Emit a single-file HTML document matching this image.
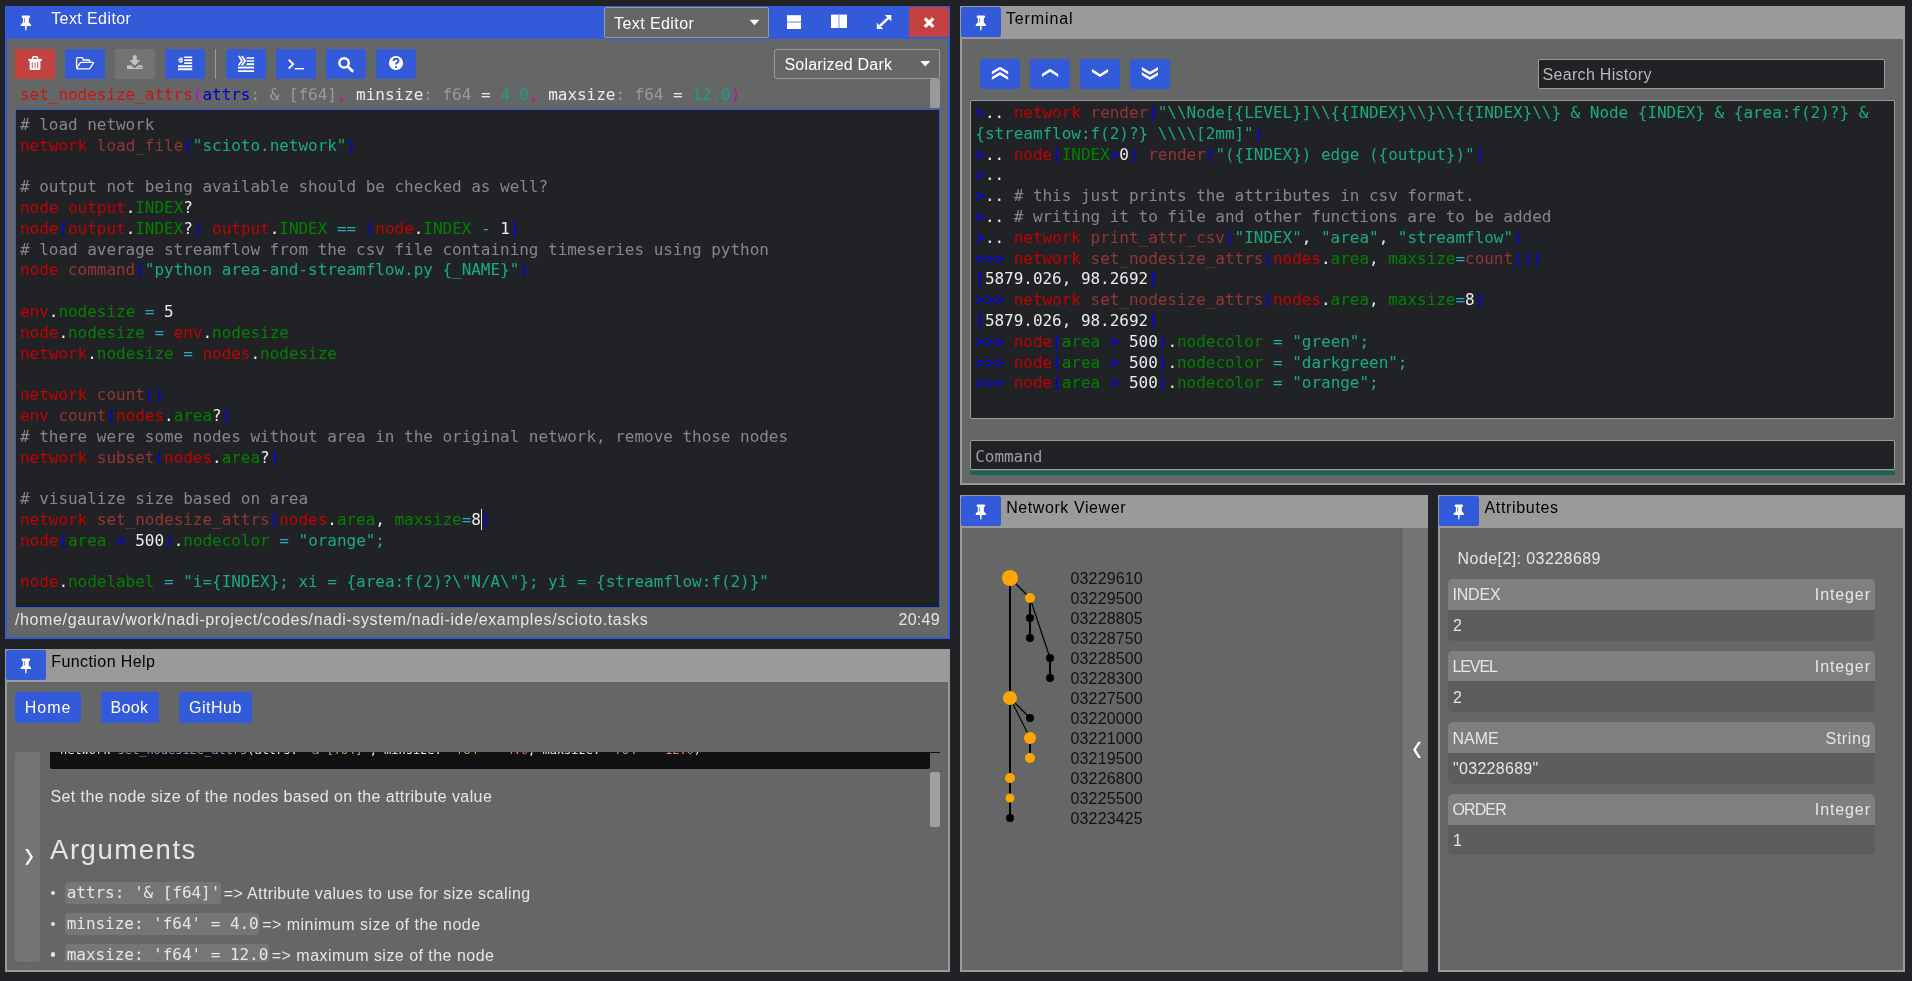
<!DOCTYPE html>
<html lang="en"><head><meta charset="utf-8"><title>NADI IDE</title>
<style>
*{box-sizing:border-box;margin:0;padding:0}
html,body{width:1912px;height:981px;overflow:hidden;background:#202225}
body{position:relative;font-family:"Liberation Sans","DejaVu Sans",sans-serif;font-size:16px;color:#e6e6e6}
.P{position:absolute}
.mono{font-family:"DejaVu Sans Mono","Liberation Mono",monospace;letter-spacing:-.002em;white-space:pre;font-size:16px;line-height:20.8px}
.ln{height:20.8px;white-space:pre}
.tx{position:absolute;white-space:pre}
.dk{color:#000}
.panel{position:absolute;background:#9a9a9b}
.panel.focus{background:#335ad9}
.pbody{position:absolute;background:#656666}
.btn{position:absolute;background:#335ad9;border-radius:2px;width:40px;height:30px}
.btn.red{background:#c3423f}
.btn.dis{background:#727473}
.btn svg{position:absolute;left:0;top:0;width:40px;height:30px}
.tbtn{position:absolute;background:#335ad9;border-radius:2px;height:30.8px;top:692px}
.pick{position:absolute;background:#656666;border:1px solid #9a9a9b;border-radius:2px}
.inp{position:absolute;background:#202225;border:1px solid #9a9a9b;border-radius:2px}
.k{color:#c40000}.f{color:#953535}.p{color:#0000ff}.a{color:#008200}.s{color:#19ad7b}.o{color:#2aa9b8}.w{color:#ececec}.c{color:#878787}
.g{color:#cc1414}.m{color:#c408c4}.b{color:#0000c8}.y{color:#9a9a9b}.t{color:#1f9c8b}
.h{color:#7f9fc4}.j{color:#9db86c}.n{color:#e0876a}
.card{position:absolute;left:1448px;width:427px;height:61.6px;border-radius:5px;overflow:hidden;background:#5d5d5d}
.card .hd{position:absolute;left:0;top:0;width:427px;height:30.8px;background:#7f7f7f}
.ic{position:absolute;background:#757776;border-radius:3px}
</style></head>
<body>
<svg width="0" height="0" style="position:absolute">
<defs>
<symbol id="i-pin" viewBox="0 0 40 30"><path fill="#fff" d="M16.600 8.500h6.500q.900 0 .900 .900v.700q0 .900-.900 .900h-.300v4.600q2.300 1.200 2.400 3.400h-4.450l-.350 4.300q-.550 .600-1.100 0l-.350-4.300h-4.450q.100-2.200 2.400-3.400v-4.600h-.300q-.900 0-.900-.900v-.700q0-.900 .900-.900z"/><path stroke="#335ad9" stroke-width=".700" d="M18.600 11.200v4.300"/></symbol>
<symbol id="i-trash" viewBox="0 0 40 30"><path fill="none" stroke="#fff" stroke-width="1.400" d="M17.600 10.200v-1.300q0-1.200 1.200-1.200h2.600q1.200 0 1.200 1.200v1.300"/><path fill="#fff" d="M13.400 9.900h13.400v2h-13.400z"/><path fill="#fff" d="M14.600 11.500h10.800v8.100q0 1.300-1.300 1.300h-8.200q-1.300 0-1.300-1.300z"/><path stroke="#c3423f" stroke-width=".9" d="M17.300 13.200v6M20 13.200v6M22.700 13.200v6"/></symbol>
<symbol id="i-folder" viewBox="0 0 40 30"><path fill="none" stroke="#fff" stroke-width="1.300" stroke-linejoin="round" d="M11.600 18.400v-8.200q0-1.500 1.500-1.500h3.400q1.500 0 1.500 1.500v.8h5.500q1.500 0 1.500 1.500v1"/><path fill="none" stroke="#fff" stroke-width="1.300" stroke-linejoin="round" d="M12.200 19.800q-.9 0-.3-1l2.900-4.500q.6-.9 1.700-.9h11.200q1.200 0 .5 1l-3 4.500q-.6.900-1.800.9z"/></symbol>
<symbol id="i-dl" viewBox="0 0 40 30"><path fill="#c2c2c2" d="M17.800 7.100q0-.8 .8-.8h2.300q.8 0 .8 .8v4h2.600q.9 0 .3 .7l-4.300 4.500q-.5.500-1 0l-4.300-4.500q-.6-.7 .3-.7h2.500z"/><path fill="#c2c2c2" d="M12.800 16.200h3.400l2.300 2.300q1.300 1.100 2.600 0l2.300-2.300h3.400q.8 0 .8 .8v2.300q0 .8-.8 .8h-14q-.8 0-.8-.8v-2.300q0-.8 .8-.8z"/><circle cx="23.700" cy="18.600" r=".65" fill="#727473"/><circle cx="25.700" cy="18.600" r=".65" fill="#727473"/></symbol>
<symbol id="i-ind1" viewBox="0 0 40 30"><path fill="#fff" d="M19.200 7.400h8v1.700h-8zM19.200 10.350h8v1.750h-8zM19.200 13.300h8v1.700h-8zM13 16.300h14.200v1.900h-14.200zM13 19.200h14.200v2h-14.200z"/><path fill="none" stroke="#fff" stroke-width="1" d="M18 10.300h-4.200M18 12.200h-4.200M15.800 8.400l-2.300 2.900l2.300 2.700M17.200 8.300l-1.200 5.800"/></symbol>
<symbol id="i-ind2" viewBox="0 0 40 30"><path fill="#fff" d="M20.600 8.200h7.500v1.600h-7.500zM20.600 11.300h7.500v1.500h-7.500zM20.600 14.300h7.500v1.600h-7.500zM12 18h16.100v1.600h-16.100zM12 21.200h16.100v1.700h-16.100z"/><path fill="#fff" fill-opacity=".45" d="M12 16.600h16.100v1.100h-16.100z"/><path fill="none" stroke="#fff" stroke-width="1.700" d="M12.700 7l3.300 4.700l-3.300 4.600M15.900 7l3.300 4.700l-3.300 4.600"/></symbol>
<symbol id="i-term" viewBox="0 0 40 30"><path fill="none" stroke="#fff" stroke-width="1.900" d="M12.700 10.700l4.500 4.400l-4.500 4.400"/><path fill="#fff" d="M18.800 19h9.100v1.400h-9.100z"/></symbol>
<symbol id="i-search" viewBox="0 0 40 30"><circle cx="18.100" cy="13.900" r="4.700" fill="none" stroke="#fff" stroke-width="2.500"/><path stroke="#fff" stroke-width="2.700" stroke-linecap="round" d="M21.900 17.700l4.500 4.300"/></symbol>
<symbol id="i-help" viewBox="0 0 40 30"><circle cx="20" cy="14" r="7.100" fill="#fff"/><path fill="none" stroke="#335ad9" stroke-width="1.900" d="M17.500 12q.1-2.300 2.600-2.300q2.400 0 2.400 2q0 1.300-1.300 1.900q-1.100.5-1.100 1.900"/><circle cx="20.100" cy="18.100" r="1.100" fill="#335ad9"/></symbol>
<symbol id="i-hsplit" viewBox="0 0 40 30"><path fill="#fff" d="M13 8.200h14v13.800h-14z"/><path fill="#8196e8" d="M13 14.500h14v1.200h-14z"/></symbol>
<symbol id="i-vsplit" viewBox="0 0 40 30"><path fill="#fff" d="M12 7.600h16v13.400h-16z"/><path fill="#8196e8" d="M19.500 7.600h1v13.400h-1z"/></symbol>
<symbol id="i-max" viewBox="0 0 40 30"><path stroke="#fff" stroke-width="2.600" d="M16 18.900l8.200-7.800"/><path fill="#fff" d="M27.300 8v6.200l-6.500-6.200zM12.800 22v-6.200l6.500 6.200z"/></symbol>
<symbol id="i-x" viewBox="0 0 40 30"><path stroke="#fff" stroke-width="3.400" d="M15.800 11.400l8.500 8.500M24.300 11.400l-8.500 8.500"/></symbol>
<symbol id="i-up2" viewBox="0 0 40 30"><path fill="#fff" d="M11.8 12.5L20 7.7L28.2 12.5V15.4L20 10.6L11.8 15.4zM11.8 17.9L20 13.1L28.2 17.9V20.8L20 16L11.8 20.8z"/></symbol>
<symbol id="i-up1" viewBox="0 0 40 30"><path fill="#fff" d="M11.9 15L20.05 9.8L28.2 15V18L20.05 12.8L11.9 18z"/></symbol>
<symbol id="i-dn1" viewBox="0 0 40 30"><path fill="#fff" d="M11.9 10.1L20 14.9L28.1 10.1V13.1L20 17.9L11.9 13.1z"/></symbol>
<symbol id="i-dn2" viewBox="0 0 40 30"><path fill="#fff" d="M11.8 8L19.9 12.8L28 8V10.9L19.9 15.7L11.8 10.9zM11.8 13.3L19.9 18.1L28 13.3V16.2L19.9 21L11.8 16.2z"/></symbol>
</defs>
</svg>
<div class="P" style="left:0;top:0;width:1912px;height:981px;will-change:transform">
<div class="P panel focus" style="left:5px;top:6px;width:945px;height:633px;"></div>
<div class="P pbody" style="left:7px;top:39px;width:941px;height:598px;"></div>
<div class="btn " style="left:6px;top:7px"><svg viewBox="0 0 40 30"><use href="#i-pin"/></svg></div>
<div class="tx " style="top:9.36px;font-size:16px;line-height:20px;height:20px;left:51.2px;color:#fff;letter-spacing:0.41px;">Text Editor</div>
<div class="P pick" style="left:604px;top:7px;width:165px;height:31px;"></div>
<div class="tx " style="top:13.86px;font-size:16px;line-height:20px;height:20px;left:614px;color:#fff;letter-spacing:0.43px;">Text Editor</div>
<svg class="P" style="left:749px;top:19px" width="12" height="8" viewBox="0 0 12 8"><path fill="#fff" d="M.6 .7h9.800l-4.900 5.600z"/></svg>
<div class="btn " style="left:774px;top:7px"><svg viewBox="0 0 40 30"><use href="#i-hsplit"/></svg></div>
<div class="btn " style="left:819px;top:7px"><svg viewBox="0 0 40 30"><use href="#i-vsplit"/></svg></div>
<div class="btn " style="left:864px;top:7px"><svg viewBox="0 0 40 30"><use href="#i-max"/></svg></div>
<div class="btn red" style="left:909px;top:7px"><svg viewBox="0 0 40 30"><use href="#i-x"/></svg></div>
<div class="btn red" style="left:15px;top:49px"><svg viewBox="0 0 40 30"><use href="#i-trash"/></svg></div>
<div class="btn " style="left:65px;top:49px"><svg viewBox="0 0 40 30"><use href="#i-folder"/></svg></div>
<div class="btn dis" style="left:115px;top:49px"><svg viewBox="0 0 40 30"><use href="#i-dl"/></svg></div>
<div class="btn " style="left:165px;top:49px"><svg viewBox="0 0 40 30"><use href="#i-ind1"/></svg></div>
<div class="btn " style="left:226px;top:49px"><svg viewBox="0 0 40 30"><use href="#i-ind2"/></svg></div>
<div class="btn " style="left:276px;top:49px"><svg viewBox="0 0 40 30"><use href="#i-term"/></svg></div>
<div class="btn " style="left:326px;top:49px"><svg viewBox="0 0 40 30"><use href="#i-search"/></svg></div>
<div class="btn " style="left:376px;top:49px"><svg viewBox="0 0 40 30"><use href="#i-help"/></svg></div>
<div class="P " style="left:215px;top:49px;width:1px;height:30px;background:#9a9a9b"></div>
<div class="P pick" style="left:774px;top:49px;width:166px;height:30px;"></div>
<div class="tx " style="top:55.36px;font-size:16px;line-height:20px;height:20px;left:784.5px;color:#fff;letter-spacing:0.19px;">Solarized Dark</div>
<svg class="P" style="left:920px;top:60px" width="12" height="8" viewBox="0 0 12 8"><path fill="#fff" d="M.3 .9h10l-5 5.600z"/></svg>
<div class="P mono" style="left:20px;top:84.8px;width:900px;height:20.8px;"><span class="g">set_nodesize_attrs</span><span class="m">(</span><span class="b">attrs</span><span class="y">: &amp; [f64]</span><span class="m">,</span> <span class="w">minsize</span><span class="y">: f64</span> <span class="w">=</span> <span class="t">4.0</span><span class="m">,</span> <span class="w">maxsize</span><span class="y">: f64</span> <span class="w">=</span> <span class="t">12.0</span><span class="m">)</span></div>
<div class="P " style="left:930px;top:79px;width:10px;height:29px;background:#9a9a9b;border-radius:2px"></div>
<div class="P " style="left:15px;top:109px;width:925px;height:499px;background:#202225;border:1px solid #335ad9"></div>
<div class="P mono" style="left:20px;top:114.8px;width:915px;height:490px;"><div class="ln"><span class="c"># load network</span></div><div class="ln"><span class="k">network</span> <span class="f">load_file</span><span class="p">(</span><span class="s">"scioto.network"</span><span class="p">)</span></div><div class="ln"> </div><div class="ln"><span class="c"># output not being available should be checked as well?</span></div><div class="ln"><span class="k">node</span> <span class="k">output</span><span class="w">.</span><span class="a">INDEX</span><span class="w">?</span></div><div class="ln"><span class="k">node</span><span class="p">(</span><span class="k">output</span><span class="w">.</span><span class="a">INDEX</span><span class="w">?</span><span class="p">)</span> <span class="k">output</span><span class="w">.</span><span class="a">INDEX</span> <span class="o">==</span> <span class="p">(</span><span class="k">node</span><span class="w">.</span><span class="a">INDEX</span> <span class="o">-</span> <span class="w">1</span><span class="p">)</span></div><div class="ln"><span class="c"># load average streamflow from the csv file containing timeseries using python</span></div><div class="ln"><span class="k">node</span> <span class="f">command</span><span class="p">(</span><span class="s">"python area-and-streamflow.py {_NAME}"</span><span class="p">)</span></div><div class="ln"> </div><div class="ln"><span class="k">env</span><span class="w">.</span><span class="a">nodesize</span> <span class="o">=</span> <span class="w">5</span></div><div class="ln"><span class="k">node</span><span class="w">.</span><span class="a">nodesize</span> <span class="o">=</span> <span class="k">env</span><span class="w">.</span><span class="a">nodesize</span></div><div class="ln"><span class="k">network</span><span class="w">.</span><span class="a">nodesize</span> <span class="o">=</span> <span class="k">nodes</span><span class="w">.</span><span class="a">nodesize</span></div><div class="ln"> </div><div class="ln"><span class="k">network</span> <span class="f">count</span><span class="p">()</span></div><div class="ln"><span class="k">env</span> <span class="f">count</span><span class="p">(</span><span class="k">nodes</span><span class="w">.</span><span class="a">area</span><span class="w">?</span><span class="p">)</span></div><div class="ln"><span class="c"># there were some nodes without area in the original network, remove those nodes</span></div><div class="ln"><span class="k">network</span> <span class="f">subset</span><span class="p">(</span><span class="k">nodes</span><span class="w">.</span><span class="a">area</span><span class="w">?</span><span class="p">)</span></div><div class="ln"> </div><div class="ln"><span class="c"># visualize size based on area</span></div><div class="ln"><span class="k">network</span> <span class="f">set_nodesize_attrs</span><span class="p">(</span><span class="k">nodes</span><span class="w">.</span><span class="a">area</span><span class="w">,</span> <span class="a">maxsize</span><span class="o">=</span><span class="w">8</span><span class="p">)</span></div><div class="ln"><span class="k">node</span><span class="p">(</span><span class="a">area</span> <span class="p">&gt;</span> <span class="w">500</span><span class="p">)</span><span class="w">.</span><span class="a">nodecolor</span> <span class="o">=</span> <span class="s">"orange"</span><span class="o">;</span></div><div class="ln"> </div><div class="ln"><span class="k">node</span><span class="w">.</span><span class="a">nodelabel</span> <span class="o">=</span> <span class="s">"i={INDEX}; xi = {area:f(2)?\"N/A\"}; yi = {streamflow:f(2)}"</span></div></div>
<div class="P " style="left:481.2px;top:509px;width:1px;height:21px;background:#e6e6e6"></div>
<div class="tx " style="top:610.36px;font-size:16px;line-height:20px;height:20px;left:15px;letter-spacing:0.62px;">/home/gaurav/work/nadi-project/codes/nadi-system/nadi-ide/examples/scioto.tasks</div>
<div class="tx " style="top:610.36px;font-size:16px;line-height:20px;height:20px;right:972px;letter-spacing:0.3px;">20:49</div>
<div class="P panel" style="left:5px;top:649px;width:945px;height:323px;"></div>
<div class="P pbody" style="left:7px;top:682px;width:941px;height:288px;"></div>
<div class="btn " style="left:6px;top:650px"><svg viewBox="0 0 40 30"><use href="#i-pin"/></svg></div>
<div class="tx dk" style="top:652.36px;font-size:16px;line-height:20px;height:20px;left:51.3px;letter-spacing:0.41px;">Function Help</div>
<div class="tbtn" style="left:15px;width:65.5px"></div>
<div class="tx " style="top:698.36px;font-size:16px;line-height:20px;height:20px;left:24.7px;color:#fff;letter-spacing:1px;">Home</div>
<div class="tbtn" style="left:100.5px;width:58.5px"></div>
<div class="tx " style="top:698.36px;font-size:16px;line-height:20px;height:20px;left:110.6px;color:#fff;letter-spacing:0.3px;">Book</div>
<div class="tbtn" style="left:179px;width:73px"></div>
<div class="tx " style="top:698.36px;font-size:16px;line-height:20px;height:20px;left:189.1px;color:#fff;letter-spacing:0.5px;">GitHub</div>
<div class="P " style="left:15px;top:752px;width:25px;height:210px;background:#737574;border-radius:2px"></div>
<svg class="P" style="left:24px;top:848px" width="11" height="18" viewBox="24 848 11 18"><path fill="#fff" d="M25.300 849h2.600l5.100 7.900l-5.100 7.800h-2.600l5-7.800z"/></svg>
<div class="P" style="left:50px;top:752px;width:890px;height:210px;overflow:hidden">
<div class="P" style="left:0;top:-14px;width:880px;height:31px;background:#111;border-radius:2px"></div>
<div class="P mono" style="left:10px;top:-9.000px;font-size:12px;line-height:15.600px;height:15.600px"><span class="w">network </span><span class="h">set_nodesize_attrs</span><span class="w">(attrs: </span><span class="j">'&amp; [f64]'</span><span class="w">, minsize: </span><span class="j">'f64'</span><span class="w"> = </span><span class="n">4.0</span><span class="w">, maxsize: </span><span class="j">'f64'</span><span class="w"> = </span><span class="n">12.0</span><span class="w">)</span></div>
<div class="P" style="left:880px;top:0;width:10px;height:1px;background:#111"></div>
<div class="P" style="left:880px;top:20px;width:10px;height:55px;background:#a0a0a0;border-radius:2px"></div>
</div>
<div class="tx " style="top:787.36px;font-size:16px;line-height:20px;height:20px;left:50.5px;letter-spacing:0.4px;">Set the node size of the nodes based on the attribute value</div>
<div class="tx " style="top:832.78px;font-size:27.5px;line-height:34.38px;height:34.38px;left:50px;letter-spacing:1.55px;">Arguments</div>
<div class="P" style="left:50px;top:752px;width:880px;height:210px;overflow:hidden">
<div class="P" style="left:.5px;top:138.80px;width:4.4px;height:4.4px;border-radius:50%;background:#e6e6e6"></div>
<div class="ic" style="left:15px;top:130.10px;width:155.5px;height:22px"></div>
<div class="P mono" style="left:16.700px;top:131.06px;height:20.800px">attrs: '&amp; [f64]'</div>
<div class="P" style="left:.5px;top:169.60px;width:4.4px;height:4.4px;border-radius:50%;background:#e6e6e6"></div>
<div class="ic" style="left:15px;top:160.90px;width:194px;height:22px"></div>
<div class="P mono" style="left:16.700px;top:161.86px;height:20.800px">minsize: 'f64' = 4.0</div>
<div class="P" style="left:.5px;top:200.40px;width:4.4px;height:4.4px;border-radius:50%;background:#e6e6e6"></div>
<div class="ic" style="left:15px;top:191.70px;width:203.6px;height:22px"></div>
<div class="P mono" style="left:16.700px;top:192.66px;height:20.800px">maxsize: 'f64' = 12.0</div>
</div>
<div class="P" style="left:50px;top:752px;width:880px;height:210px;overflow:hidden">
<div class="tx" style="left:173.7px;top:132.36px;line-height:20px;letter-spacing:0.37px">=&gt; Attribute values to use for size scaling</div>
<div class="tx" style="left:212.2px;top:163.16px;line-height:20px;letter-spacing:0.48px">=&gt; minimum size of the node</div>
<div class="tx" style="left:221.8px;top:193.96px;line-height:20px;letter-spacing:0.47px">=&gt; maximum size of the node</div>
</div>
<div class="P panel" style="left:960px;top:6px;width:945px;height:479px;"></div>
<div class="P pbody" style="left:962px;top:39px;width:941px;height:444px;"></div>
<div class="btn " style="left:961px;top:7px"><svg viewBox="0 0 40 30"><use href="#i-pin"/></svg></div>
<div class="tx dk" style="top:9.36px;font-size:16px;line-height:20px;height:20px;left:1005.9px;letter-spacing:0.88px;">Terminal</div>
<div class="btn " style="left:980px;top:59px"><svg viewBox="0 0 40 30"><use href="#i-up2"/></svg></div>
<div class="btn " style="left:1030px;top:59px"><svg viewBox="0 0 40 30"><use href="#i-up1"/></svg></div>
<div class="btn " style="left:1080px;top:59px"><svg viewBox="0 0 40 30"><use href="#i-dn1"/></svg></div>
<div class="btn " style="left:1130px;top:59px"><svg viewBox="0 0 40 30"><use href="#i-dn2"/></svg></div>
<div class="P inp" style="left:1538px;top:59px;width:347px;height:30px;"></div>
<div class="tx " style="top:65.36px;font-size:16px;line-height:20px;height:20px;left:1542.6px;color:#b9b9b9;letter-spacing:0.3px;">Search History</div>
<div class="P " style="left:970px;top:100px;width:925px;height:319px;background:#202225;border:1px solid #9a9a9b;border-radius:2px"></div>
<div class="P mono" style="left:975.3px;top:103px;width:915px;height:300px;"><div class="ln"><span class="p">&gt;</span><span class="w">..</span> <span class="k">network</span> <span class="f">render</span><span class="p">(</span><span class="s">"\\Node[{LEVEL}]\\{{INDEX}\\}\\{{INDEX}\\} &amp; Node {INDEX} &amp; {area:f(2)?} &amp;</span></div><div class="ln"><span class="s">{streamflow:f(2)?} \\\\[2mm]"</span><span class="p">)</span></div><div class="ln"><span class="p">&gt;</span><span class="w">..</span> <span class="k">node</span><span class="p">(</span><span class="a">INDEX</span><span class="p">&gt;</span><span class="w">0</span><span class="p">)</span> <span class="f">render</span><span class="p">(</span><span class="s">"({INDEX}) edge ({output})"</span><span class="p">)</span></div><div class="ln"><span class="p">&gt;</span><span class="w">..</span></div><div class="ln"><span class="p">&gt;</span><span class="w">..</span> <span class="c"># this just prints the attributes in csv format.</span></div><div class="ln"><span class="p">&gt;</span><span class="w">..</span> <span class="c"># writing it to file and other functions are to be added</span></div><div class="ln"><span class="p">&gt;</span><span class="w">..</span> <span class="k">network</span> <span class="f">print_attr_csv</span><span class="p">(</span><span class="s">"INDEX"</span><span class="w">,</span> <span class="s">"area"</span><span class="w">,</span> <span class="s">"streamflow"</span><span class="p">)</span></div><div class="ln"><span class="p">&gt;&gt;&gt;</span> <span class="k">network</span> <span class="f">set_nodesize_attrs</span><span class="p">(</span><span class="k">nodes</span><span class="w">.</span><span class="a">area</span><span class="w">,</span> <span class="a">maxsize</span><span class="o">=</span><span class="f">count</span><span class="p">())</span></div><div class="ln"><span class="p">[</span><span class="w">5879.026, 98.2692</span><span class="p">]</span></div><div class="ln"><span class="p">&gt;&gt;&gt;</span> <span class="k">network</span> <span class="f">set_nodesize_attrs</span><span class="p">(</span><span class="k">nodes</span><span class="w">.</span><span class="a">area</span><span class="w">,</span> <span class="a">maxsize</span><span class="o">=</span><span class="w">8</span><span class="p">)</span></div><div class="ln"><span class="p">[</span><span class="w">5879.026, 98.2692</span><span class="p">]</span></div><div class="ln"><span class="p">&gt;&gt;&gt;</span> <span class="k">node</span><span class="p">(</span><span class="a">area</span> <span class="p">&gt;</span> <span class="w">500</span><span class="p">)</span><span class="w">.</span><span class="a">nodecolor</span> <span class="o">=</span> <span class="s">"green"</span><span class="o">;</span></div><div class="ln"><span class="p">&gt;&gt;&gt;</span> <span class="k">node</span><span class="p">(</span><span class="a">area</span> <span class="p">&gt;</span> <span class="w">500</span><span class="p">)</span><span class="w">.</span><span class="a">nodecolor</span> <span class="o">=</span> <span class="s">"darkgreen"</span><span class="o">;</span></div><div class="ln"><span class="p">&gt;&gt;&gt;</span> <span class="k">node</span><span class="p">(</span><span class="a">area</span> <span class="p">&gt;</span> <span class="w">500</span><span class="p">)</span><span class="w">.</span><span class="a">nodecolor</span> <span class="o">=</span> <span class="s">"orange"</span><span class="o">;</span></div></div>
<div class="P inp" style="left:970px;top:440px;width:925px;height:30px;"></div>
<div class="P mono" style="left:975.2px;top:447px;width:100px;height:20.8px;color:#9e9e9f">Command</div>
<div class="P " style="left:970px;top:471px;width:925px;height:4px;background:#12664f;border-radius:2px"></div>
<div class="P panel" style="left:960px;top:495px;width:468px;height:477px;"></div>
<div class="P pbody" style="left:962px;top:528px;width:441px;height:442px;"></div>
<div class="P " style="left:1403px;top:528px;width:25px;height:444px;background:#737574"></div>
<div class="btn " style="left:961px;top:496px"><svg viewBox="0 0 40 30"><use href="#i-pin"/></svg></div>
<div class="tx dk" style="top:498.36px;font-size:16px;line-height:20px;height:20px;left:1006.2px;letter-spacing:0.58px;">Network Viewer</div>
<svg class="P" style="left:1411px;top:740px" width="12" height="20" viewBox="1411 740 12 20"><path fill="#fff" d="M1421 741.700h-2.700l-5.200 8.150l5.200 8.150h2.700l-5.100-8.150z"/></svg>
<svg class="P" style="left:962px;top:528px" width="441" height="442" viewBox="962 528 441 442"><line x1="1030" y1="598" x2="1010" y2="578" stroke="#000" stroke-width="1.150"/><line x1="1030" y1="618" x2="1030" y2="598" stroke="#000" stroke-width="2"/><line x1="1030" y1="638" x2="1030" y2="618" stroke="#000" stroke-width="2"/><line x1="1050" y1="658" x2="1030" y2="598" stroke="#000" stroke-width="1.150"/><line x1="1050" y1="678" x2="1050" y2="658" stroke="#000" stroke-width="2"/><line x1="1010" y1="578" x2="1010" y2="698" stroke="#000" stroke-width="2"/><line x1="1030" y1="718" x2="1010" y2="698" stroke="#000" stroke-width="1.150"/><line x1="1030" y1="738" x2="1010" y2="698" stroke="#000" stroke-width="1.150"/><line x1="1030" y1="758" x2="1030" y2="738" stroke="#000" stroke-width="2"/><line x1="1010" y1="698" x2="1010" y2="778" stroke="#000" stroke-width="2"/><line x1="1010" y1="778" x2="1010" y2="798" stroke="#000" stroke-width="2"/><line x1="1010" y1="798" x2="1010" y2="818" stroke="#000" stroke-width="2"/><circle cx="1010" cy="578" r="8" fill="#ffa500"/><circle cx="1030" cy="598" r="5" fill="#ffa500"/><circle cx="1030" cy="618" r="4" fill="#000"/><circle cx="1030" cy="638" r="4" fill="#000"/><circle cx="1050" cy="658" r="4" fill="#000"/><circle cx="1050" cy="678" r="4" fill="#000"/><circle cx="1010" cy="698" r="7" fill="#ffa500"/><circle cx="1030" cy="718" r="4" fill="#000"/><circle cx="1030" cy="738" r="6" fill="#ffa500"/><circle cx="1030" cy="758" r="5" fill="#ffa500"/><circle cx="1010" cy="778" r="5" fill="#ffa500"/><circle cx="1010" cy="798" r="4.5" fill="#ffa500"/><circle cx="1010" cy="818" r="4" fill="#000"/><text x="1070.500" y="583.8" font-family="Liberation Sans, sans-serif" font-size="16" letter-spacing=".15" fill="#111">03229610</text><text x="1070.500" y="603.8" font-family="Liberation Sans, sans-serif" font-size="16" letter-spacing=".15" fill="#111">03229500</text><text x="1070.500" y="623.8" font-family="Liberation Sans, sans-serif" font-size="16" letter-spacing=".15" fill="#111">03228805</text><text x="1070.500" y="643.8" font-family="Liberation Sans, sans-serif" font-size="16" letter-spacing=".15" fill="#111">03228750</text><text x="1070.500" y="663.8" font-family="Liberation Sans, sans-serif" font-size="16" letter-spacing=".15" fill="#111">03228500</text><text x="1070.500" y="683.8" font-family="Liberation Sans, sans-serif" font-size="16" letter-spacing=".15" fill="#111">03228300</text><text x="1070.500" y="703.8" font-family="Liberation Sans, sans-serif" font-size="16" letter-spacing=".15" fill="#111">03227500</text><text x="1070.500" y="723.8" font-family="Liberation Sans, sans-serif" font-size="16" letter-spacing=".15" fill="#111">03220000</text><text x="1070.500" y="743.8" font-family="Liberation Sans, sans-serif" font-size="16" letter-spacing=".15" fill="#111">03221000</text><text x="1070.500" y="763.8" font-family="Liberation Sans, sans-serif" font-size="16" letter-spacing=".15" fill="#111">03219500</text><text x="1070.500" y="783.8" font-family="Liberation Sans, sans-serif" font-size="16" letter-spacing=".15" fill="#111">03226800</text><text x="1070.500" y="803.8" font-family="Liberation Sans, sans-serif" font-size="16" letter-spacing=".15" fill="#111">03225500</text><text x="1070.500" y="823.8" font-family="Liberation Sans, sans-serif" font-size="16" letter-spacing=".15" fill="#111">03223425</text></svg>
<div class="P panel" style="left:1438px;top:495px;width:467px;height:477px;"></div>
<div class="P pbody" style="left:1440px;top:528px;width:463px;height:442px;"></div>
<div class="btn " style="left:1439px;top:496px"><svg viewBox="0 0 40 30"><use href="#i-pin"/></svg></div>
<div class="tx dk" style="top:498.36px;font-size:16px;line-height:20px;height:20px;left:1484.5px;letter-spacing:0.67px;">Attributes</div>
<div class="tx " style="top:549.36px;font-size:16px;line-height:20px;height:20px;left:1457.6px;letter-spacing:0.42px;">Node[2]: 03228689</div>
<div class="card" style="top:579px"><div class="hd"></div></div>
<div class="tx " style="top:585.36px;font-size:16px;line-height:20px;height:20px;left:1452.5px;letter-spacing:-0.2px;">INDEX</div>
<div class="tx " style="top:585.36px;font-size:16px;line-height:20px;height:20px;right:41.1px;letter-spacing:0.9px;">Integer</div>
<div class="tx " style="top:616.16px;font-size:16px;line-height:20px;height:20px;left:1453px;letter-spacing:0.3px;">2</div>
<div class="card" style="top:650.6px"><div class="hd"></div></div>
<div class="tx " style="top:656.96px;font-size:16px;line-height:20px;height:20px;left:1452.5px;letter-spacing:-1.1px;">LEVEL</div>
<div class="tx " style="top:656.96px;font-size:16px;line-height:20px;height:20px;right:41.1px;letter-spacing:0.9px;">Integer</div>
<div class="tx " style="top:687.76px;font-size:16px;line-height:20px;height:20px;left:1453px;letter-spacing:0.3px;">2</div>
<div class="card" style="top:722.2px"><div class="hd"></div></div>
<div class="tx " style="top:728.56px;font-size:16px;line-height:20px;height:20px;left:1452.5px;letter-spacing:0px;">NAME</div>
<div class="tx " style="top:728.56px;font-size:16px;line-height:20px;height:20px;right:41.1px;letter-spacing:0.6px;">String</div>
<div class="tx " style="top:759.36px;font-size:16px;line-height:20px;height:20px;left:1453px;letter-spacing:0.3px;">"03228689"</div>
<div class="card" style="top:793.8px"><div class="hd"></div></div>
<div class="tx " style="top:800.16px;font-size:16px;line-height:20px;height:20px;left:1452.5px;letter-spacing:-0.9px;">ORDER</div>
<div class="tx " style="top:800.16px;font-size:16px;line-height:20px;height:20px;right:41.1px;letter-spacing:0.9px;">Integer</div>
<div class="tx " style="top:830.96px;font-size:16px;line-height:20px;height:20px;left:1453px;letter-spacing:0.3px;">1</div>
</div>
</body></html>
